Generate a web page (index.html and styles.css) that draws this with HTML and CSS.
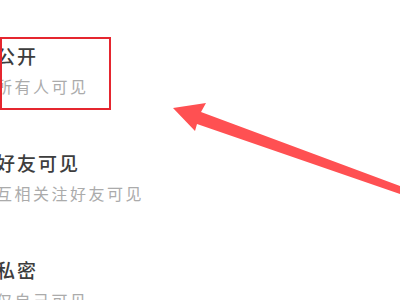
FILE: index.html
```html
<!DOCTYPE html>
<html lang="zh-CN">
<head>
<meta charset="utf-8">
<link rel="stylesheet" href="styles.css">
</head>
<body>
<div class="page">
  <ul class="options">
    <li class="option">
      <div class="title">公开</div>
      <div class="desc">所有人可见</div>
    </li>
    <li class="option">
      <div class="title">好友可见</div>
      <div class="desc">互相关注好友可见</div>
    </li>
    <li class="option">
      <div class="title">私密</div>
      <div class="desc">仅自己可见</div>
    </li>
  </ul>
  <div class="highlight"></div>
  <svg class="arrow" width="400" height="300" viewBox="0 0 400 300">
    <polygon points="173,108 206,103 201,112 400,186 400,194 197,124 195,131" fill="#ff5052"/>
  </svg>
</div>
</body>
</html>
```
FILE: styles.css
```css
html, body {
  margin: 0;
  padding: 0;
  background: #ffffff;
}
.page {
  position: relative;
  width: 400px;
  height: 300px;
  overflow: hidden;
  font-family: "Noto Sans CJK SC", "Noto Sans", sans-serif;
}
.options {
  list-style: none;
  margin: 0 0 0 -4px;
  padding: 41px 0 0 0;
  display: flex;
  flex-direction: column;
  gap: 46px;
}
.option {
  display: flex;
  flex-direction: column;
}
.title {
  font-size: 19px;
  line-height: 30px;
  letter-spacing: 2px;
  color: #3d3d3d;
  font-weight: 500;
}
.desc {
  font-size: 16px;
  line-height: 31px;
  letter-spacing: 2.5px;
  color: #ababab;
}
.highlight {
  position: absolute;
  left: 0;
  top: 37px;
  width: 107px;
  height: 69px;
  border: 2px solid #e5262f;
}
.arrow {
  position: absolute;
  left: 0;
  top: 0;
}
```
